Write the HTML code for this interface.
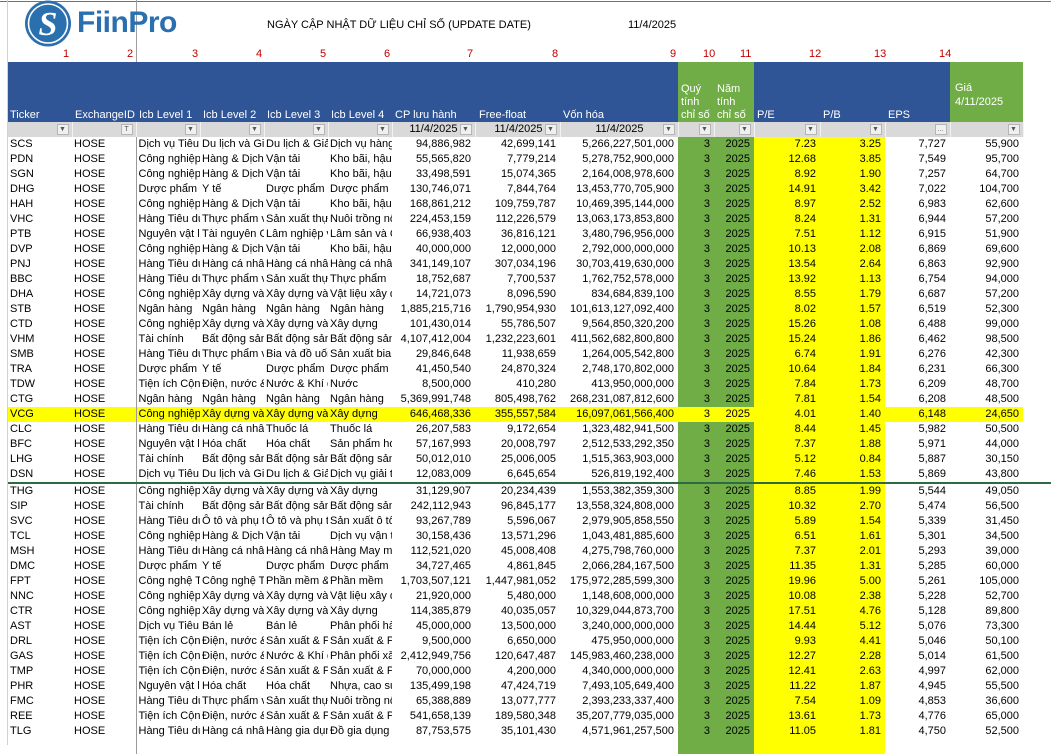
<!DOCTYPE html>
<html><head><meta charset="utf-8">
<style>
*{margin:0;padding:0;box-sizing:border-box}
body{width:1051px;height:745px;overflow:hidden;background:#fff;font-family:"Liberation Sans",Arial,sans-serif;font-size:11px;color:#000;position:relative}
.abs{position:absolute}
table{border-collapse:collapse;table-layout:fixed;position:absolute;left:8px}
td{height:15px;line-height:15px;padding:0 2px;white-space:nowrap;overflow:hidden}
#data td:nth-child(n+7){text-align:right;padding-right:4px}
#data td:nth-child(10),#data td:nth-child(11){background:#70ad47}
#data td:nth-child(12),#data td:nth-child(13){background:#ffff00}
#data tr.hl td{background:#ffff00}
#data td:nth-child(3){border-left:1px solid #9a9a9a}
.num{color:#c00000;font-size:11px;position:absolute;top:48px}
.hb{position:absolute;top:62px;height:60px;background:#2f5597}
.hg{position:absolute;top:62px;height:60px;background:#70ad47}
.ht{position:absolute;color:#fff;font-size:11px;line-height:13px}
#filt td{background:#d9d9d9;border-right:1px solid #f2f2f2;position:relative;text-align:right;padding-right:17px}
.bt{position:absolute;right:3px;top:2px;width:12px;height:11px;background:#f0f0f0;border:1px solid #b5b5b5;font-size:7px;line-height:9px;text-align:center;color:#555;padding:0}
</style></head><body>
<div class="abs" style="left:0;top:1px;width:1051px;height:1px;background:#4f8a4f"></div>
<div class="abs" style="left:7px;top:0;width:1px;height:745px;background:#d0d0d0"></div>
<div class="abs" style="left:136px;top:0;width:1px;height:122px;background:#a0a0a0"></div>
<svg class="abs" style="left:23px;top:0" width="52" height="48" viewBox="0 0 52 48">
<circle cx="25" cy="23.5" r="23" fill="#2a6fae"/>
<circle cx="25" cy="23.5" r="19.5" fill="none" stroke="#fff" stroke-width="1.6"/>
<text x="25" y="35" text-anchor="middle" font-family="Liberation Serif,serif" font-size="34" font-style="italic" font-weight="bold" fill="#fff">S</text>
</svg>
<div class="abs" style="left:77px;top:6px;font-size:30px;font-weight:bold;color:#2a6fae;letter-spacing:-0.5px">FiinPro</div>
<div class="abs" style="left:267px;top:19px;font-size:11px">NGÀY CẬP NHẬT DỮ LIỆU CHỈ SỐ (UPDATE DATE)</div>
<div class="abs" style="left:628px;top:19px;font-size:11px">11/4/2025</div>

<div class="num" style="left:63px">1</div><div class="num" style="left:127px">2</div>
<div class="num" style="left:192px">3</div><div class="num" style="left:256px">4</div>
<div class="num" style="left:320px">5</div><div class="num" style="left:384px">6</div>
<div class="num" style="left:467px">7</div><div class="num" style="left:552px">8</div>
<div class="num" style="left:670px">9</div><div class="num" style="left:703px">10</div>
<div class="num" style="left:740px">11</div><div class="num" style="left:809px">12</div>
<div class="num" style="left:874px">13</div><div class="num" style="left:939px">14</div>

<div class="hb" style="left:8px;width:670px"></div>
<div class="hg" style="left:678px;width:76px"></div>
<div class="hb" style="left:754px;width:196px"></div>
<div class="hg" style="left:950px;width:73px"></div>
<div class="ht" style="left:10px;top:109px">Ticker</div>
<div class="ht" style="left:75px;top:109px">ExchangeID</div>
<div class="ht" style="left:139px;top:109px">Icb Level 1</div>
<div class="ht" style="left:203px;top:109px">Icb Level 2</div>
<div class="ht" style="left:267px;top:109px">Icb Level 3</div>
<div class="ht" style="left:331px;top:109px">Icb Level 4</div>
<div class="ht" style="left:395px;top:109px">CP lưu hành</div>
<div class="ht" style="left:479px;top:109px">Free-float</div>
<div class="ht" style="left:563px;top:109px">Vốn hóa</div>
<div class="ht" style="left:681px;top:83px">Quý<br>tính<br>chỉ số</div>
<div class="ht" style="left:717px;top:83px">Năm<br>tính<br>chỉ số</div>
<div class="ht" style="left:757px;top:109px">P/E</div>
<div class="ht" style="left:823px;top:109px">P/B</div>
<div class="ht" style="left:888px;top:109px">EPS</div>
<div class="ht" style="left:955px;top:81px;line-height:14px">Giá<br>4/11/2025</div>

<table id="filt" style="top:122px;width:1015px">
<colgroup><col style="width:64px"><col style="width:64px"><col style="width:64px"><col style="width:64px"><col style="width:64px"><col style="width:64px"><col style="width:83px"><col style="width:85px"><col style="width:118px"><col style="width:36px"><col style="width:40px"><col style="width:66px"><col style="width:65px"><col style="width:65px"><col style="width:73px"></colgroup>
<tr><td><span class="bt">▼</span></td><td><span class="bt">T</span></td><td><span class="bt">▼</span></td><td><span class="bt">▼</span></td><td><span class="bt">▼</span></td><td><span class="bt">▼</span></td><td>11/4/2025<span class="bt">▼</span></td><td>11/4/2025<span class="bt">▼</span></td><td style="padding-right:34px">11/4/2025<span class="bt">▼</span></td><td><span class="bt">▼</span></td><td><span class="bt">▼</span></td><td><span class="bt">▼</span></td><td><span class="bt">▼</span></td><td><span class="bt">…</span></td><td><span class="bt">▼</span></td></tr>
</table>

<table id="data" style="top:137px;width:1015px">
<colgroup><col style="width:64px"><col style="width:64px"><col style="width:64px"><col style="width:64px"><col style="width:64px"><col style="width:64px"><col style="width:83px"><col style="width:85px"><col style="width:118px"><col style="width:36px"><col style="width:40px"><col style="width:66px"><col style="width:65px"><col style="width:65px"><col style="width:73px"></colgroup>
<tr><td>SCS</td><td>HOSE</td><td>Dịch vụ Tiêu dùng</td><td>Du lịch và Giải trí</td><td>Du lịch &amp; Giải trí</td><td>Dịch vụ hàng không</td><td>94,886,982</td><td>42,699,141</td><td>5,266,227,501,000</td><td>3</td><td>2025</td><td>7.23</td><td>3.25</td><td>7,727</td><td>55,900</td></tr>
<tr><td>PDN</td><td>HOSE</td><td>Công nghiệp</td><td>Hàng &amp; Dịch vụ</td><td>Vận tải</td><td>Kho bãi, hậu cần</td><td>55,565,820</td><td>7,779,214</td><td>5,278,752,900,000</td><td>3</td><td>2025</td><td>12.68</td><td>3.85</td><td>7,549</td><td>95,700</td></tr>
<tr><td>SGN</td><td>HOSE</td><td>Công nghiệp</td><td>Hàng &amp; Dịch vụ</td><td>Vận tải</td><td>Kho bãi, hậu cần</td><td>33,498,591</td><td>15,074,365</td><td>2,164,008,978,600</td><td>3</td><td>2025</td><td>8.92</td><td>1.90</td><td>7,257</td><td>64,700</td></tr>
<tr><td>DHG</td><td>HOSE</td><td>Dược phẩm và Y tế</td><td>Y tế</td><td>Dược phẩm</td><td>Dược phẩm</td><td>130,746,071</td><td>7,844,764</td><td>13,453,770,705,900</td><td>3</td><td>2025</td><td>14.91</td><td>3.42</td><td>7,022</td><td>104,700</td></tr>
<tr><td>HAH</td><td>HOSE</td><td>Công nghiệp</td><td>Hàng &amp; Dịch vụ</td><td>Vận tải</td><td>Kho bãi, hậu cần</td><td>168,861,212</td><td>109,759,787</td><td>10,469,395,144,000</td><td>3</td><td>2025</td><td>8.97</td><td>2.52</td><td>6,983</td><td>62,600</td></tr>
<tr><td>VHC</td><td>HOSE</td><td>Hàng Tiêu dùng</td><td>Thực phẩm và đồ uống</td><td>Sản xuất thực phẩm</td><td>Nuôi trồng nông sản</td><td>224,453,159</td><td>112,226,579</td><td>13,063,173,853,800</td><td>3</td><td>2025</td><td>8.24</td><td>1.31</td><td>6,944</td><td>57,200</td></tr>
<tr><td>PTB</td><td>HOSE</td><td>Nguyên vật liệu</td><td>Tài nguyên Cơ bản</td><td>Lâm nghiệp và Giấy</td><td>Lâm sản và Chế biến</td><td>66,938,403</td><td>36,816,121</td><td>3,480,796,956,000</td><td>3</td><td>2025</td><td>7.51</td><td>1.12</td><td>6,915</td><td>51,900</td></tr>
<tr><td>DVP</td><td>HOSE</td><td>Công nghiệp</td><td>Hàng &amp; Dịch vụ</td><td>Vận tải</td><td>Kho bãi, hậu cần</td><td>40,000,000</td><td>12,000,000</td><td>2,792,000,000,000</td><td>3</td><td>2025</td><td>10.13</td><td>2.08</td><td>6,869</td><td>69,600</td></tr>
<tr><td>PNJ</td><td>HOSE</td><td>Hàng Tiêu dùng</td><td>Hàng cá nhân</td><td>Hàng cá nhân</td><td>Hàng cá nhân</td><td>341,149,107</td><td>307,034,196</td><td>30,703,419,630,000</td><td>3</td><td>2025</td><td>13.54</td><td>2.64</td><td>6,863</td><td>92,900</td></tr>
<tr><td>BBC</td><td>HOSE</td><td>Hàng Tiêu dùng</td><td>Thực phẩm và đồ uống</td><td>Sản xuất thực phẩm</td><td>Thực phẩm</td><td>18,752,687</td><td>7,700,537</td><td>1,762,752,578,000</td><td>3</td><td>2025</td><td>13.92</td><td>1.13</td><td>6,754</td><td>94,000</td></tr>
<tr><td>DHA</td><td>HOSE</td><td>Công nghiệp</td><td>Xây dựng và Vật liệu</td><td>Xây dựng và Vật liệu</td><td>Vật liệu xây dựng</td><td>14,721,073</td><td>8,096,590</td><td>834,684,839,100</td><td>3</td><td>2025</td><td>8.55</td><td>1.79</td><td>6,687</td><td>57,200</td></tr>
<tr><td>STB</td><td>HOSE</td><td>Ngân hàng</td><td>Ngân hàng</td><td>Ngân hàng</td><td>Ngân hàng</td><td>1,885,215,716</td><td>1,790,954,930</td><td>101,613,127,092,400</td><td>3</td><td>2025</td><td>8.02</td><td>1.57</td><td>6,519</td><td>52,300</td></tr>
<tr><td>CTD</td><td>HOSE</td><td>Công nghiệp</td><td>Xây dựng và Vật liệu</td><td>Xây dựng và Vật liệu</td><td>Xây dựng</td><td>101,430,014</td><td>55,786,507</td><td>9,564,850,320,200</td><td>3</td><td>2025</td><td>15.26</td><td>1.08</td><td>6,488</td><td>99,000</td></tr>
<tr><td>VHM</td><td>HOSE</td><td>Tài chính</td><td>Bất động sản</td><td>Bất động sản</td><td>Bất động sản</td><td>4,107,412,004</td><td>1,232,223,601</td><td>411,562,682,800,800</td><td>3</td><td>2025</td><td>15.24</td><td>1.86</td><td>6,462</td><td>98,500</td></tr>
<tr><td>SMB</td><td>HOSE</td><td>Hàng Tiêu dùng</td><td>Thực phẩm và đồ uống</td><td>Bia và đồ uống</td><td>Sản xuất bia</td><td>29,846,648</td><td>11,938,659</td><td>1,264,005,542,800</td><td>3</td><td>2025</td><td>6.74</td><td>1.91</td><td>6,276</td><td>42,300</td></tr>
<tr><td>TRA</td><td>HOSE</td><td>Dược phẩm và Y tế</td><td>Y tế</td><td>Dược phẩm</td><td>Dược phẩm</td><td>41,450,540</td><td>24,870,324</td><td>2,748,170,802,000</td><td>3</td><td>2025</td><td>10.64</td><td>1.84</td><td>6,231</td><td>66,300</td></tr>
<tr><td>TDW</td><td>HOSE</td><td>Tiện ích Cộng đồng</td><td>Điện, nước &amp; xăng dầu</td><td>Nước &amp; Khí đốt</td><td>Nước</td><td>8,500,000</td><td>410,280</td><td>413,950,000,000</td><td>3</td><td>2025</td><td>7.84</td><td>1.73</td><td>6,209</td><td>48,700</td></tr>
<tr><td>CTG</td><td>HOSE</td><td>Ngân hàng</td><td>Ngân hàng</td><td>Ngân hàng</td><td>Ngân hàng</td><td>5,369,991,748</td><td>805,498,762</td><td>268,231,087,812,600</td><td>3</td><td>2025</td><td>7.81</td><td>1.54</td><td>6,208</td><td>48,500</td></tr>
<tr class="hl"><td>VCG</td><td>HOSE</td><td>Công nghiệp</td><td>Xây dựng và Vật liệu</td><td>Xây dựng và Vật liệu</td><td>Xây dựng</td><td>646,468,336</td><td>355,557,584</td><td>16,097,061,566,400</td><td>3</td><td>2025</td><td>4.01</td><td>1.40</td><td>6,148</td><td>24,650</td></tr>
<tr><td>CLC</td><td>HOSE</td><td>Hàng Tiêu dùng</td><td>Hàng cá nhân</td><td>Thuốc lá</td><td>Thuốc lá</td><td>26,207,583</td><td>9,172,654</td><td>1,323,482,941,500</td><td>3</td><td>2025</td><td>8.44</td><td>1.45</td><td>5,982</td><td>50,500</td></tr>
<tr><td>BFC</td><td>HOSE</td><td>Nguyên vật liệu</td><td>Hóa chất</td><td>Hóa chất</td><td>Sản phẩm hóa chất</td><td>57,167,993</td><td>20,008,797</td><td>2,512,533,292,350</td><td>3</td><td>2025</td><td>7.37</td><td>1.88</td><td>5,971</td><td>44,000</td></tr>
<tr><td>LHG</td><td>HOSE</td><td>Tài chính</td><td>Bất động sản</td><td>Bất động sản</td><td>Bất động sản</td><td>50,012,010</td><td>25,006,005</td><td>1,515,363,903,000</td><td>3</td><td>2025</td><td>5.12</td><td>0.84</td><td>5,887</td><td>30,150</td></tr>
<tr style="border-bottom:2px solid #2e6b45"><td>DSN</td><td>HOSE</td><td>Dịch vụ Tiêu dùng</td><td>Du lịch và Giải trí</td><td>Du lịch &amp; Giải trí</td><td>Dịch vụ giải trí</td><td>12,083,009</td><td>6,645,654</td><td>526,819,192,400</td><td>3</td><td>2025</td><td>7.46</td><td>1.53</td><td>5,869</td><td>43,800</td></tr>
<tr><td>THG</td><td>HOSE</td><td>Công nghiệp</td><td>Xây dựng và Vật liệu</td><td>Xây dựng và Vật liệu</td><td>Xây dựng</td><td>31,129,907</td><td>20,234,439</td><td>1,553,382,359,300</td><td>3</td><td>2025</td><td>8.85</td><td>1.99</td><td>5,544</td><td>49,050</td></tr>
<tr><td>SIP</td><td>HOSE</td><td>Tài chính</td><td>Bất động sản</td><td>Bất động sản</td><td>Bất động sản</td><td>242,112,943</td><td>96,845,177</td><td>13,558,324,808,000</td><td>3</td><td>2025</td><td>10.32</td><td>2.70</td><td>5,474</td><td>56,500</td></tr>
<tr><td>SVC</td><td>HOSE</td><td>Hàng Tiêu dùng</td><td>Ô tô và phụ tùng</td><td>Ô tô và phụ tùng</td><td>Sản xuất ô tô</td><td>93,267,789</td><td>5,596,067</td><td>2,979,905,858,550</td><td>3</td><td>2025</td><td>5.89</td><td>1.54</td><td>5,339</td><td>31,450</td></tr>
<tr><td>TCL</td><td>HOSE</td><td>Công nghiệp</td><td>Hàng &amp; Dịch vụ</td><td>Vận tải</td><td>Dịch vụ vận tải</td><td>30,158,436</td><td>13,571,296</td><td>1,043,481,885,600</td><td>3</td><td>2025</td><td>6.51</td><td>1.61</td><td>5,301</td><td>34,500</td></tr>
<tr><td>MSH</td><td>HOSE</td><td>Hàng Tiêu dùng</td><td>Hàng cá nhân</td><td>Hàng cá nhân</td><td>Hàng May mặc</td><td>112,521,020</td><td>45,008,408</td><td>4,275,798,760,000</td><td>3</td><td>2025</td><td>7.37</td><td>2.01</td><td>5,293</td><td>39,000</td></tr>
<tr><td>DMC</td><td>HOSE</td><td>Dược phẩm và Y tế</td><td>Y tế</td><td>Dược phẩm</td><td>Dược phẩm</td><td>34,727,465</td><td>4,861,845</td><td>2,066,284,167,500</td><td>3</td><td>2025</td><td>11.35</td><td>1.31</td><td>5,285</td><td>60,000</td></tr>
<tr><td>FPT</td><td>HOSE</td><td>Công nghệ Thông tin</td><td>Công nghệ Thông tin</td><td>Phần mềm &amp; Dịch vụ</td><td>Phần mềm</td><td>1,703,507,121</td><td>1,447,981,052</td><td>175,972,285,599,300</td><td>3</td><td>2025</td><td>19.96</td><td>5.00</td><td>5,261</td><td>105,000</td></tr>
<tr><td>NNC</td><td>HOSE</td><td>Công nghiệp</td><td>Xây dựng và Vật liệu</td><td>Xây dựng và Vật liệu</td><td>Vật liệu xây dựng</td><td>21,920,000</td><td>5,480,000</td><td>1,148,608,000,000</td><td>3</td><td>2025</td><td>10.08</td><td>2.38</td><td>5,228</td><td>52,700</td></tr>
<tr><td>CTR</td><td>HOSE</td><td>Công nghiệp</td><td>Xây dựng và Vật liệu</td><td>Xây dựng và Vật liệu</td><td>Xây dựng</td><td>114,385,879</td><td>40,035,057</td><td>10,329,044,873,700</td><td>3</td><td>2025</td><td>17.51</td><td>4.76</td><td>5,128</td><td>89,800</td></tr>
<tr><td>AST</td><td>HOSE</td><td>Dịch vụ Tiêu dùng</td><td>Bán lẻ</td><td>Bán lẻ</td><td>Phân phối hàng</td><td>45,000,000</td><td>13,500,000</td><td>3,240,000,000,000</td><td>3</td><td>2025</td><td>14.44</td><td>5.12</td><td>5,076</td><td>73,300</td></tr>
<tr><td>DRL</td><td>HOSE</td><td>Tiện ích Cộng đồng</td><td>Điện, nước &amp; xăng dầu</td><td>Sản xuất &amp; Phân phối</td><td>Sản xuất &amp; Phân phối</td><td>9,500,000</td><td>6,650,000</td><td>475,950,000,000</td><td>3</td><td>2025</td><td>9.93</td><td>4.41</td><td>5,046</td><td>50,100</td></tr>
<tr><td>GAS</td><td>HOSE</td><td>Tiện ích Cộng đồng</td><td>Điện, nước &amp; xăng dầu</td><td>Nước &amp; Khí đốt</td><td>Phân phối xăng</td><td>2,412,949,756</td><td>120,647,487</td><td>145,983,460,238,000</td><td>3</td><td>2025</td><td>12.27</td><td>2.28</td><td>5,014</td><td>61,500</td></tr>
<tr><td>TMP</td><td>HOSE</td><td>Tiện ích Cộng đồng</td><td>Điện, nước &amp; xăng dầu</td><td>Sản xuất &amp; Phân phối</td><td>Sản xuất &amp; Phân phối</td><td>70,000,000</td><td>4,200,000</td><td>4,340,000,000,000</td><td>3</td><td>2025</td><td>12.41</td><td>2.63</td><td>4,997</td><td>62,000</td></tr>
<tr><td>PHR</td><td>HOSE</td><td>Nguyên vật liệu</td><td>Hóa chất</td><td>Hóa chất</td><td>Nhựa, cao su</td><td>135,499,198</td><td>47,424,719</td><td>7,493,105,649,400</td><td>3</td><td>2025</td><td>11.22</td><td>1.87</td><td>4,945</td><td>55,500</td></tr>
<tr><td>FMC</td><td>HOSE</td><td>Hàng Tiêu dùng</td><td>Thực phẩm và đồ uống</td><td>Sản xuất thực phẩm</td><td>Nuôi trồng nông sản</td><td>65,388,889</td><td>13,077,777</td><td>2,393,233,337,400</td><td>3</td><td>2025</td><td>7.54</td><td>1.09</td><td>4,853</td><td>36,600</td></tr>
<tr><td>REE</td><td>HOSE</td><td>Tiện ích Cộng đồng</td><td>Điện, nước &amp; xăng dầu</td><td>Sản xuất &amp; Phân phối</td><td>Sản xuất &amp; Phân phối</td><td>541,658,139</td><td>189,580,348</td><td>35,207,779,035,000</td><td>3</td><td>2025</td><td>13.61</td><td>1.73</td><td>4,776</td><td>65,000</td></tr>
<tr><td>TLG</td><td>HOSE</td><td>Hàng Tiêu dùng</td><td>Hàng cá nhân</td><td>Hàng gia dụng</td><td>Đồ gia dụng</td><td>87,753,575</td><td>35,101,430</td><td>4,571,961,257,500</td><td>3</td><td>2025</td><td>11.05</td><td>1.81</td><td>4,750</td><td>52,500</td></tr>
<tr><td></td><td></td><td></td><td></td><td></td><td></td><td></td><td></td><td></td><td></td><td></td><td></td><td></td><td></td><td></td></tr>
</table>
<div class="abs" style="left:1023px;top:482px;width:28px;height:2px;background:#2e6b45"></div>
</body></html>
